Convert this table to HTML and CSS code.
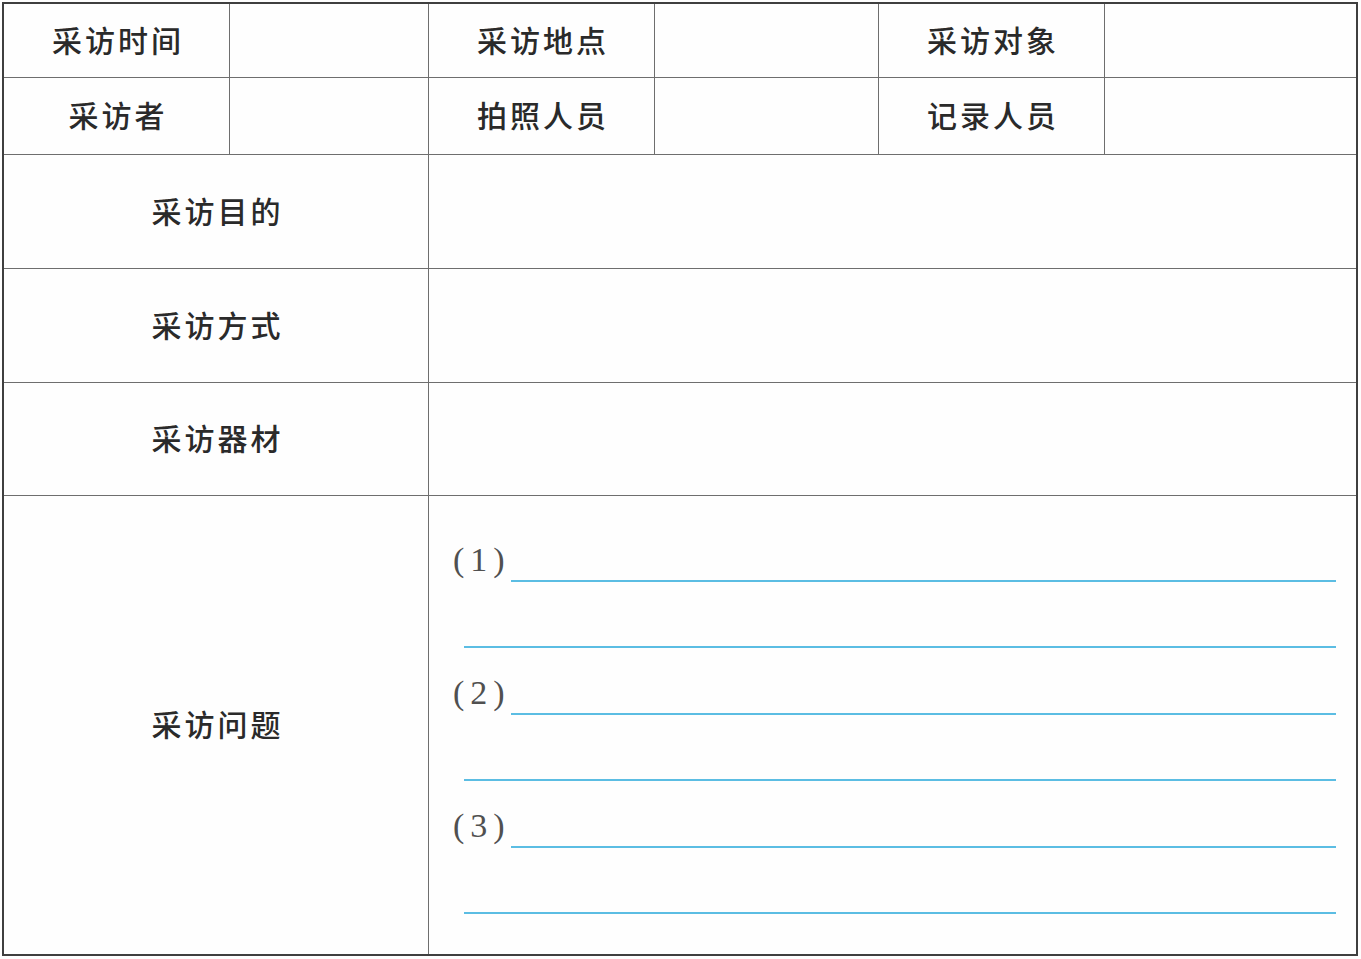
FILE: index.html
```html
<!DOCTYPE html>
<html lang="zh-CN">
<head>
<meta charset="utf-8">
<title>采访记录表</title>
<link rel="stylesheet" href="styles.css">
</head>
<body>
<div class="sheet">
  <div class="cell label">采访时间</div>
  <div class="cell"></div>
  <div class="cell label">采访地点</div>
  <div class="cell"></div>
  <div class="cell label">采访对象</div>
  <div class="cell last-col"></div>

  <div class="cell label">采访者</div>
  <div class="cell"></div>
  <div class="cell label">拍照人员</div>
  <div class="cell"></div>
  <div class="cell label">记录人员</div>
  <div class="cell last-col"></div>

  <div class="cell label wide">采访目的</div>
  <div class="cell value last-col"></div>

  <div class="cell label wide">采访方式</div>
  <div class="cell value last-col"></div>

  <div class="cell label wide">采访器材</div>
  <div class="cell value last-col"></div>

  <div class="cell label wide last-row">采访问题</div>
  <div class="cell value last-col last-row questions">
    <div class="q">
      <div class="q-head"><span class="num">(1)</span><span class="rule"></span></div>
      <div class="rule full"></div>
    </div>
    <div class="q">
      <div class="q-head"><span class="num">(2)</span><span class="rule"></span></div>
      <div class="rule full"></div>
    </div>
    <div class="q">
      <div class="q-head"><span class="num">(3)</span><span class="rule"></span></div>
      <div class="rule full"></div>
    </div>
  </div>
</div>
</body>
</html>
```

FILE: styles.css
```css
* { box-sizing: border-box; }

html, body {
  margin: 0;
  padding: 0;
  background: #fefefe;
}

body {
  font-family: "Noto Sans CJK SC", "Noto Sans", sans-serif;
  color: #2a2a2a;
}

.sheet {
  margin: 2px 0 0 2px;
  width: 1356px;
  border: 2px solid #3f3f3f;
  display: grid;
  grid-template-columns: 226px 199px 226px 224px 226px 251px;
  grid-template-rows: 74px 77px 114px 114px 113px 458px;
}

.cell {
  border-right: 1px solid #6e6e6e;
  border-bottom: 1px solid #6e6e6e;
}

.cell.last-col { border-right: none; }
.cell.last-row { border-bottom: none; }

.label {
  display: flex;
  align-items: center;
  justify-content: center;
  font-size: 30px;
  font-weight: 500;
  letter-spacing: 3px;
  padding-left: 3px;
  padding-bottom: 4px;
  line-height: 1;
}

.wide { grid-column: span 2; }
.value { grid-column: span 4; }

.questions {
  padding: 47px 20px 0 24px;
  display: flex;
  flex-direction: column;
}

.q {
  display: flex;
  flex-direction: column;
  margin-bottom: 28px;
}

.q-head {
  display: flex;
  align-items: flex-end;
}

.num {
  font-family: "Liberation Serif", "Times New Roman", serif;
  font-size: 34px;
  line-height: 34px;
  padding-bottom: 5px;
  letter-spacing: 6px;
  color: #505050;
}

.rule {
  display: block;
  height: 2px;
  background: #5bbde3;
  flex: 1;
}

.rule.full {
  flex: none;
  margin-top: 64px;
  margin-left: 11px;
}
```
